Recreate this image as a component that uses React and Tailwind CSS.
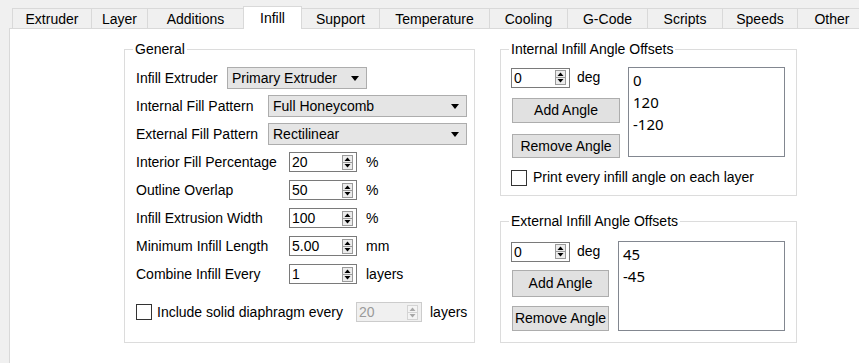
import React from "react";

const tabs = [
  ["Extruder", 79],
  ["Layer", 56],
  ["Additions", 96],
  ["Infill", 59],
  ["Support", 77],
  ["Temperature", 110],
  ["Cooling", 78],
  ["G-Code", 80],
  ["Scripts", 75],
  ["Speeds", 75],
  ["Other", 69],
];

const font = { fontFamily: '"Liberation Sans", Arial, sans-serif' };

function SpinArrows({ disabled }) {
  const c = disabled ? "#a8a8a8" : "#000";
  const b = disabled ? "#d4d4d4" : "#9a9a9a";
  return (
    <svg width="11" height="15" viewBox="0 0 11 15" className="shrink-0">
      <rect x="0.5" y="0.5" width="10" height="14" fill={disabled ? "#f4f4f4" : "#ececec"} stroke={b} />
      <line x1="1" y1="7.5" x2="10" y2="7.5" stroke={b} />
      <path d="M5.5 2.5 L8.5 6 L2.5 6 Z" fill={c} />
      <path d="M2.5 9 L8.5 9 L5.5 12.5 Z" fill={c} />
    </svg>
  );
}

function Spin({ value, w = "w-[68px]", disabled }) {
  return (
    <div
      className={`${w} h-[20px] flex items-center justify-between pl-[2px] pr-[3px] border ${
        disabled ? "border-[#cccccc] bg-[#f0f0f0] text-[#9a9a9a]" : "border-[#7a7a7a] bg-white text-black"
      }`}
    >
      <span className="leading-none">{value}</span>
      <SpinArrows disabled={disabled} />
    </div>
  );
}

function Combo({ value, w, h = "h-[22px]" }) {
  return (
    <div className={`${w} ${h} flex items-center justify-between pl-[4px] pr-[7px] border border-[#adadad] bg-[#e5e5e5]`}>
      <span>{value}</span>
      <svg width="8" height="5" viewBox="0 0 8 5">
        <path d="M0 0 L8 0 L4 5 Z" fill="#000" />
      </svg>
    </div>
  );
}

function Btn({ label, w, h }) {
  return (
    <div className={`${w} ${h} flex items-center justify-center border border-[#adadad] bg-[#e1e1e1]`}>
      {label}
    </div>
  );
}

function Check() {
  return <div className="w-[16px] h-[16px] border border-[#333333] bg-white shrink-0" />;
}

function Group({ title, className, children }) {
  return (
    <fieldset className={`border border-[#dcdcdc] ${className}`}>
      <legend className="ml-[8px] px-[2px] leading-[16px]">{title}</legend>
      {children}
    </fieldset>
  );
}

function SpinRow({ label, value, unit }) {
  return (
    <div className="h-[28px] flex items-center">
      <span className="w-[153px]">{label}</span>
      <Spin value={value} />
      <span className="ml-[9px]">{unit}</span>
    </div>
  );
}

function AngleBox({ title, values, btnW, btnH, gaps, top, listW, check, className }) {
  return (
    <Group title={title} className={className}>
      <div className={`flex pl-[10px] ${top}`}>
        <div className="flex flex-col">
          <div className="flex items-center">
            <Spin value="0" w="w-[59px]" />
            <span className="ml-[7px]">deg</span>
          </div>
          <div className={`ml-[1px] ${gaps[0]}`}>
            <Btn label="Add Angle" w={btnW} h={btnH[0]} />
          </div>
          <div className={`ml-[1px] ${gaps[1]}`}>
            <Btn label="Remove Angle" w={btnW} h={btnH[1]} />
          </div>
        </div>
        <div
          className={`${listW} h-[90px] ml-auto mr-[11px] border border-[#828790] bg-white pl-[4px] pt-[1px] text-[15px] leading-[22px]`}
          style={{ fontFamily: '"Noto Sans", "Open Sans", sans-serif' }}
        >
          {values.map((v) => (
            <div key={v}>{v}</div>
          ))}
        </div>
      </div>
      {check && (
        <div className="flex items-center gap-[6px] pl-[10px] mt-[9px]">
          <Check />
          <span>{check}</span>
        </div>
      )}
    </Group>
  );
}

export default function App() {
  return (
    <div className="w-[859px] h-[363px] bg-[#f0f0f0] overflow-hidden flex flex-col text-[14px] text-black" style={font}>
      {/* tab strip */}
      <div className="h-[28px] flex items-end pl-[12px] relative z-10 shrink-0">
        {tabs.map(([name, w], i) => {
          const sel = name === "Infill";
          const afterSel = i > 0 && tabs[i - 1][0] === "Infill";
          return (
            <div
              key={name}
              style={{ width: w }}
              className={
                sel
                  ? "h-[23px] -mb-[1px] bg-white border-t border-l border-r border-[#d9d9d9] flex items-center justify-center shrink-0"
                  : `h-[20px] pt-[1px] bg-[#f0f0f0] border-t ${afterSel ? "" : "border-l"} border-[#d9d9d9] flex items-center justify-center shrink-0`
              }
            >
              {name}
            </div>
          );
        })}
      </div>

      {/* pane */}
      <div className="flex-1 ml-[9px] bg-white border-l border-t border-[#d9d9d9] flex items-start gap-[25px] pl-[114px] pt-[12px]">
        <Group title="General" className="w-[351px] h-[302px] shrink-0">
          <div className="pl-[11px] pt-[7px]">
            <div className="h-[28px] flex items-center">
              <span className="w-[91px]">Infill Extruder</span>
              <Combo value="Primary Extruder" w="w-[140px]" />
            </div>
            <div className="h-[28px] flex items-center">
              <span className="w-[132px]">Internal Fill Pattern</span>
              <Combo value="Full Honeycomb" w="w-[199px]" />
            </div>
            <div className="h-[28px] flex items-center">
              <span className="w-[132px]">External Fill Pattern</span>
              <Combo value="Rectilinear" w="w-[199px]" />
            </div>
            <SpinRow label="Interior Fill Percentage" value="20" unit="%" />
            <SpinRow label="Outline Overlap" value="50" unit="%" />
            <SpinRow label="Infill Extrusion Width" value="100" unit="%" />
            <SpinRow label="Minimum Infill Length" value="5.00" unit="mm" />
            <SpinRow label="Combine Infill Every" value="1" unit="layers" />
            <div className="h-[28px] mt-[10px] flex items-center">
              <Check />
              <span className="ml-[5px] w-[199px]">Include solid diaphragm every</span>
              <Spin value="20" w="w-[66px]" disabled />
              <span className="ml-[8px]">layers</span>
            </div>
          </div>
        </Group>

        <div className="flex flex-col gap-[17px] shrink-0">
          <AngleBox
            title="Internal Infill Angle Offsets"
            values={["0", "120", "-120"]}
            btnW="w-[108px]"
            btnH={["h-[25px]", "h-[24px]"]}
            gaps={["mt-[10px]", "mt-[11px]"]}
            top="pt-[10px]"
            listW="w-[157px]"
            check="Print every infill angle on each layer"
            className="w-[297px] h-[155px]"
          />
          <AngleBox
            title="External Infill Angle Offsets"
            values={["45", "-45"]}
            btnW="w-[97px]"
            btnH={["h-[27px]", "h-[25px]"]}
            gaps={["mt-[8px]", "mt-[9px]"]}
            top="pt-[12px]"
            listW="w-[167px]"
            className="w-[297px] h-[130px]"
          />
        </div>
      </div>
    </div>
  );
}
